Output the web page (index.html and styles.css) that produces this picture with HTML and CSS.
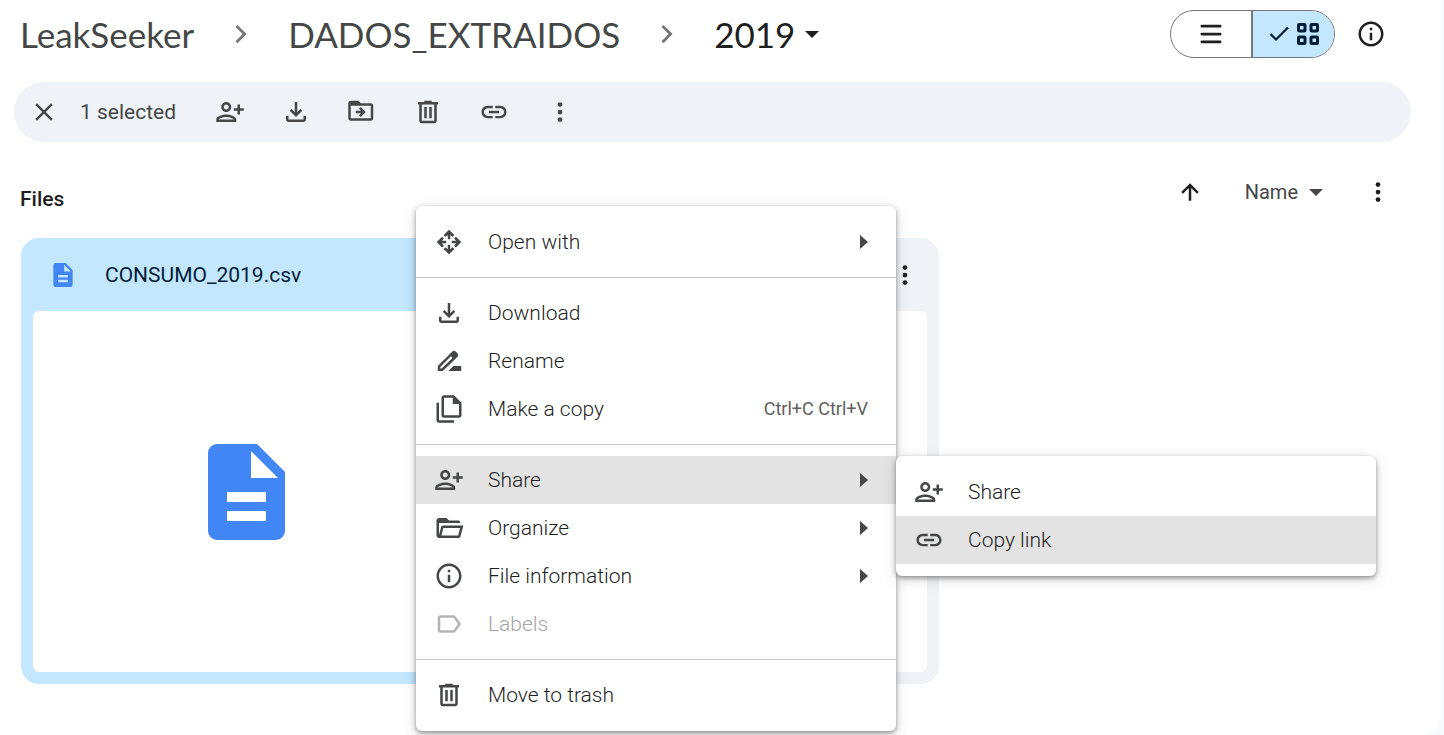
FILE: index.html
```
<!DOCTYPE html>
<html lang="en">
<head>
<meta charset="utf-8">
<title>2019</title>
<link rel="stylesheet" href="styles.css">
</head>
<body>
<svg class="sprite" aria-hidden="true">
  <symbol id="close" viewBox="0 0 24 24"><path d="M19 6.41 17.59 5 12 10.59 6.41 5 5 6.41 10.59 12 5 17.59 6.41 19 12 13.41 17.59 19 19 17.59 13.41 12z"/></symbol>
  <symbol id="person-add" viewBox="0 0 24 24"><path d="M13 8c0-2.210-1.790-4-4-4S5 5.790 5 8s1.790 4 4 4 4-1.790 4-4zm-2 0c0 1.100-.9 2-2 2s-2-.9-2-2 .9-2 2-2 2 .9 2 2zM1 18v2h16v-2c0-2.660-5.330-4-8-4s-8 1.340-8 4zm2 0c.2-.71 3.300-2 6-2 2.690 0 5.780 1.280 6 2H3zM20 14v-3h3V9h-3V6h-2v3h-3v2h3v3z"/></symbol>
  <symbol id="download" viewBox="0 0 24 24"><path d="M18 15v3H6v-3H4v3c0 1.100.9 2 2 2h12c1.100 0 2-.9 2-2v-3h-2zm-1-4-1.410-1.410L13 12.170V4h-2v8.170L8.410 9.590 7 11l5 5 5-5z"/></symbol>
  <symbol id="move" viewBox="0 0 24 24"><path d="M19 5h-8L9 3H3c-1.100 0-2 .9-2 2v12c0 1.100.9 2 2 2h16c1.100 0 2-.9 2-2V7c0-1.100-.9-2-2-2zm0 12H3V7h16v10zM11.160 11H7v2h4.160l-1.590 1.590L10.990 16 15 12l-4.010-4-1.410 1.410L11.160 11z"/></symbol>
  <symbol id="trash" viewBox="0 0 24 24"><path d="M9 3h6v1h5v2h-1v13c0 1.100-.9 2-2 2H7c-1.100 0-2-.9-2-2V6H4V4h5V3zM7 6v13h10V6H7zm2 2h2v9H9V8zm4 0h2v9h-2V8z"/></symbol>
  <symbol id="link" viewBox="0 0 24 24"><path d="M3.900 12c0-1.710 1.390-3.100 3.100-3.100h4V7H7c-2.760 0-5 2.240-5 5s2.240 5 5 5h4v-1.900H7c-1.710 0-3.100-1.390-3.100-3.100zM8 13h8v-2H8v2zm9-6h-4v1.900h4c1.710 0 3.100 1.390 3.100 3.100s-1.390 3.100-3.100 3.100h-4V17h4c2.760 0 5-2.240 5-5s-2.240-5-5-5z"/></symbol>
  <symbol id="more" viewBox="0 0 24 24"><circle cx="12" cy="6" r="1.900"/><circle cx="12" cy="12" r="1.900"/><circle cx="12" cy="18" r="1.900"/></symbol>
  <symbol id="info" viewBox="0 0 24 24"><path d="M11 7h2v2h-2zm0 4h2v6h-2zm1-9C6.480 2 2 6.480 2 12s4.480 10 10 10 10-4.480 10-10S17.520 2 12 2zm0 18c-4.410 0-8-3.590-8-8s3.590-8 8-8 8 3.590 8 8-3.590 8-8 8z"/></symbol>
  <symbol id="chevron" viewBox="0 0 24 24"><path d="m9.200 4.700-1.600 1.600 5.700 5.700-5.700 5.700 1.600 1.600 7.300-7.300z"/></symbol>
  <symbol id="caret" viewBox="0 0 14 7"><path d="M0 0h14L7 7z"/></symbol>
  <symbol id="caret-right" viewBox="0 0 8 14"><path d="M0 0v14l8-7z"/></symbol>
  <symbol id="list" viewBox="0 0 24 24"><path d="M2 3.500h20M2 12h20M2 20.500h20" fill="none" stroke="currentColor" stroke-width="3" stroke-linecap="round"/></symbol>
  <symbol id="check" viewBox="0 0 20 16"><path d="m1.500 8 5.500 5.500L19 1.500" fill="none" stroke="currentColor" stroke-width="2.200"/></symbol>
  <symbol id="grid" viewBox="0 0 22 22"><g fill="none" stroke="currentColor" stroke-width="3"><rect x="1.500" y="1.500" width="6.500" height="6.500" rx=".8"/><rect x="14" y="1.500" width="6.500" height="6.500" rx=".8"/><rect x="1.500" y="14" width="6.500" height="6.500" rx=".8"/><rect x="14" y="14" width="6.500" height="6.500" rx=".8"/></g></symbol>
  <symbol id="arrow-up" viewBox="0 0 24 24"><path d="m5 12 1.410 1.410L11 8.830V19h2V8.830l4.580 4.590L19 12l-7-7-7 7z"/></symbol>
  <symbol id="open-with" viewBox="0 0 24 24"><g id="arrow-n"><path d="M12 2.200 16.300 6.400 14.900 7.900 13 6.300v3.500h-2V6.300L9.100 7.900 7.700 6.400z"/></g><use href="#arrow-n" transform="rotate(90 12 12)"/><use href="#arrow-n" transform="rotate(180 12 12)"/><use href="#arrow-n" transform="rotate(270 12 12)"/></symbol>
  <symbol id="rename" viewBox="0 0 24 24"><path fill-rule="evenodd" d="M3 20v-4L14.300 4.700a2.400 2.400 0 0 1 3.400 0l.8.8a2.400 2.400 0 0 1 0 3.400L7 20H3zm2-2h1.200l8.600-8.500-1.300-1.300L5 16.800V18z"/><path d="M11.500 20l4-4h6.300v4z"/></symbol>
  <symbol id="copy" viewBox="0 0 24 24"><path d="M16 1H8C6.900 1 6 1.900 6 3v14c0 1.100.9 2 2 2h12c1.100 0 2-.9 2-2V7l-6-6zm4 16H8V3h7v5h5v9zM2 7h2v14h12v2H4c-1.100 0-2-.9-2-2V7z"/></symbol>
  <symbol id="folder" viewBox="0 0 24 24"><path d="M21 8V7.500C21 6.700 20.300 6 19.500 6H12l-2-2H4c-1.100 0-2 .9-2 2v12c0 1.100.9 2 2 2h15.300c.9 0 1.700-.6 1.900-1.500L23.500 10H7.500c-.9 0-1.700.6-1.900 1.500L4 17.500V8h17zM7.500 12h13.400l-1.600 6H5.900l1.600-6z"/></symbol>
  <symbol id="label" viewBox="0 0 24 24"><path d="M17.200 5.800C16.800 5.300 16.200 5 15.500 5H5c-1.100 0-2 .9-2 2v10c0 1.100.9 2 2 2h10.500c.7 0 1.300-.3 1.700-.8L21.700 12l-4.500-6.200zM15.500 17H5V7h10.500l3.700 5-3.700 5z"/></symbol>
  <symbol id="doc" viewBox="0 0 77 96"><path fill-rule="evenodd" d="M9 0h40l28 28v59a9 9 0 0 1-9 9H9a9 9 0 0 1-9-9V9a9 9 0 0 1 9-9zm34 7v27h27zM19 48v10h39V48zm0 19v10h39V67z"/></symbol>
</svg>

<main class="panel">
  <header class="header">
    <nav class="crumbs" aria-label="Folder path">
      <a class="crumb" href="#">LeakSeeker</a>
      <svg class="icon chevron"><use href="#chevron"/></svg>
      <a class="crumb" href="#">DADOS_EXTRAIDOS</a>
      <svg class="icon chevron"><use href="#chevron"/></svg>
      <button class="crumb current" type="button">2019<svg class="caret"><use href="#caret"/></svg></button>
    </nav>
    <div class="views">
      <div class="toggle">
        <button class="view" type="button" aria-label="List layout"><svg class="glyph"><use href="#list"/></svg></button>
        <button class="view active" type="button" aria-label="Grid layout"><svg class="check"><use href="#check"/></svg><svg class="glyph"><use href="#grid"/></svg></button>
      </div>
      <button class="tool dark" type="button" aria-label="View details"><svg class="icon"><use href="#info"/></svg></button>
    </div>
  </header>

  <div class="toolbar">
    <button class="tool" type="button" aria-label="Clear selection"><svg class="icon"><use href="#close"/></svg></button>
    <span class="count">1 selected</span>
    <div class="tools">
      <button class="tool" type="button" aria-label="Share"><svg class="icon"><use href="#person-add"/></svg></button>
      <button class="tool" type="button" aria-label="Download"><svg class="icon"><use href="#download"/></svg></button>
      <button class="tool" type="button" aria-label="Move"><svg class="icon"><use href="#move"/></svg></button>
      <button class="tool" type="button" aria-label="Move to trash"><svg class="icon"><use href="#trash"/></svg></button>
      <button class="tool" type="button" aria-label="Copy link"><svg class="icon"><use href="#link"/></svg></button>
      <button class="tool" type="button" aria-label="More actions"><svg class="icon"><use href="#more"/></svg></button>
    </div>
  </div>

  <div class="list-head">
    <h2 class="title">Files</h2>
    <div class="sort">
      <button class="tool dark" type="button" aria-label="Reverse sort"><svg class="icon"><use href="#arrow-up"/></svg></button>
      <button class="sort-by" type="button">Name<svg class="caret"><use href="#caret"/></svg></button>
      <button class="tool dark" type="button" aria-label="Sort options"><svg class="icon"><use href="#more"/></svg></button>
    </div>
  </div>

  <div class="files">
    <article class="card selected">
      <div class="card-head">
        <svg class="doc-small"><use href="#doc"/></svg>
        <span class="name">CONSUMO_2019.csv</span>
      </div>
      <div class="preview"><svg class="doc-large"><use href="#doc"/></svg></div>
    </article>
    <article class="card">
      <div class="card-head">
        <button class="tool dark card-more" type="button" aria-label="More actions"><svg class="icon"><use href="#more"/></svg></button>
      </div>
      <div class="preview"></div>
    </article>
  </div>

  <ul class="menu context">
    <li><button class="item" type="button"><svg class="icon"><use href="#open-with"/></svg><span class="text">Open with</span><svg class="sub"><use href="#caret-right"/></svg></button></li>
    <li class="rule"></li>
    <li><button class="item" type="button"><svg class="icon"><use href="#download"/></svg><span class="text">Download</span></button></li>
    <li><button class="item" type="button"><svg class="icon"><use href="#rename"/></svg><span class="text">Rename</span></button></li>
    <li><button class="item" type="button"><svg class="icon"><use href="#copy"/></svg><span class="text">Make a copy</span><span class="keys">Ctrl+C Ctrl+V</span></button></li>
    <li class="rule"></li>
    <li class="parent">
      <button class="item hover" type="button"><svg class="icon"><use href="#person-add"/></svg><span class="text">Share</span><svg class="sub"><use href="#caret-right"/></svg></button>
      <ul class="menu submenu">
        <li><button class="item" type="button"><svg class="icon"><use href="#person-add"/></svg><span class="text">Share</span></button></li>
        <li><button class="item hover" type="button"><svg class="icon"><use href="#link"/></svg><span class="text">Copy link</span></button></li>
      </ul>
    </li>
    <li><button class="item" type="button"><svg class="icon"><use href="#folder"/></svg><span class="text">Organize</span><svg class="sub"><use href="#caret-right"/></svg></button></li>
    <li><button class="item" type="button"><svg class="icon"><use href="#info"/></svg><span class="text">File information</span><svg class="sub"><use href="#caret-right"/></svg></button></li>
    <li><button class="item" type="button" disabled><svg class="icon"><use href="#label"/></svg><span class="text">Labels</span></button></li>
    <li class="rule"></li>
    <li><button class="item" type="button"><svg class="icon"><use href="#trash"/></svg><span class="text">Move to trash</span></button></li>
  </ul>
</main>
</body>
</html>
```
FILE: styles.css
```
* {
  box-sizing: border-box;
}

body {
  margin: 0;
  background: #f8fafd;
  color: #1f1f1f;
  font-family: Roboto, "Liberation Sans", sans-serif;
  font-size: 21px;
  line-height: 30px;
}

button {
  padding: 0;
  border: 0;
  background: none;
  color: inherit;
  font: inherit;
  cursor: pointer;
}

svg {
  display: block;
  flex: none;
  fill: currentColor;
}

.sprite {
  position: absolute;
  width: 0;
  height: 0;
}

.icon {
  width: 30px;
  height: 30px;
}

.caret {
  width: 14px;
  height: 7px;
}

.panel {
  position: relative;
  min-height: 100vh;
  margin-right: 3px;
  padding: 10px 30px 0 14px;
  border-radius: 0 0 20px 0;
  background: #fff;
}

.header {
  display: flex;
  justify-content: space-between;
  align-items: center;
  height: 48px;
  padding: 0 25px 0 6px;
}

.crumbs {
  display: flex;
  align-items: center;
  gap: 32px;
  color: #444746;
  font-family: Lato, "Liberation Sans", sans-serif;
  font-size: 35px;
  line-height: 46px;
}

.crumb {
  color: inherit;
  text-decoration: none;
}

.chevron {
  color: #747775;
}

.current {
  display: flex;
  align-items: center;
  gap: 10px;
  color: #1f1f1f;
}

.views {
  display: flex;
  align-items: center;
  gap: 21px;
}

.toggle {
  display: flex;
  width: 165px;
  height: 48px;
  overflow: hidden;
  border: 1px solid #747775;
  border-radius: 24px;
}

.view {
  display: flex;
  flex: 1;
  justify-content: center;
  align-items: center;
  gap: 8px;
}

.view.active {
  flex: none;
  width: 83px;
  border-left: 2px solid #747775;
  background: #c2e7ff;
  color: #001d35;
}

.glyph {
  width: 22px;
  height: 22px;
}

.check {
  width: 20px;
  height: 16px;
}

.tool {
  color: #444746;
}

.tool.dark {
  color: #1f1f1f;
}

.toolbar {
  display: flex;
  align-items: center;
  gap: 21px;
  height: 60px;
  margin-top: 24px;
  padding: 0 15px;
  border-radius: 30px;
  background: #eff3f8;
  color: #444746;
}

.count {
  min-width: 99px;
}

.tools {
  display: flex;
  gap: 36px;
  padding-left: 15px;
}

.list-head {
  display: flex;
  justify-content: space-between;
  align-items: flex-start;
  padding: 35px 18px 0 6px;
}

.title {
  margin: 0;
  padding-top: 7px;
  font-size: 21px;
  font-weight: 500;
}

.sort {
  display: flex;
  align-items: center;
  gap: 40px;
}

.sort-by {
  display: flex;
  align-items: center;
  gap: 11px;
  color: #444746;
  font-size: 20px;
}

.files {
  display: grid;
  grid-template-columns: repeat(3, 1fr);
  gap: 18px;
  padding: 24px 4px 0 7px;
}

.card {
  padding: 0 12px 12px;
  border-radius: 18px;
  background: #eff3f8;
}

.card.selected {
  background: #c2e7ff;
  color: #001d35;
}

.card-head {
  display: flex;
  align-items: center;
  height: 73px;
  padding-left: 20px;
}

.doc-small {
  width: 20px;
  height: 24px;
  color: #4285f4;
}

.name {
  padding-left: 32px;
}

.card-more {
  margin: 0 7px 0 auto;
}

.preview {
  display: flex;
  justify-content: center;
  align-items: center;
  height: 361px;
  border-radius: 6px;
  background: #fff;
}

.doc-large {
  width: 77px;
  height: 96px;
  color: #4285f4;
}

.menu {
  position: absolute;
  width: 480px;
  margin: 0;
  padding: 12px 0;
  border-radius: 6px;
  background: #fff;
  box-shadow: 0 2px 5px rgba(0, 0, 0, 0.4), 0 4px 16px rgba(0, 0, 0, 0.12);
  list-style: none;
}

.context {
  top: 206px;
  left: 416px;
}

.parent {
  position: relative;
}

.submenu {
  top: 0;
  left: 100%;
}

.item {
  display: flex;
  align-items: center;
  width: 100%;
  height: 48px;
  padding: 0 28px 0 18px;
  gap: 24px;
  color: #444746;
  text-align: left;
}

.item.hover {
  background: #e3e3e3;
}

.item:disabled {
  color: #b4b5b5;
}

.text {
  flex: 1;
  color: #1f1f1f;
  font-weight: 300;
}

.item:disabled .text {
  color: #a5a5a5;
}

.keys {
  color: #5f6161;
  font-size: 18px;
}

.sub {
  width: 8px;
  height: 14px;
}

.rule {
  height: 1px;
  margin: 11px 0;
  background: #c7c7c7;
}
```
